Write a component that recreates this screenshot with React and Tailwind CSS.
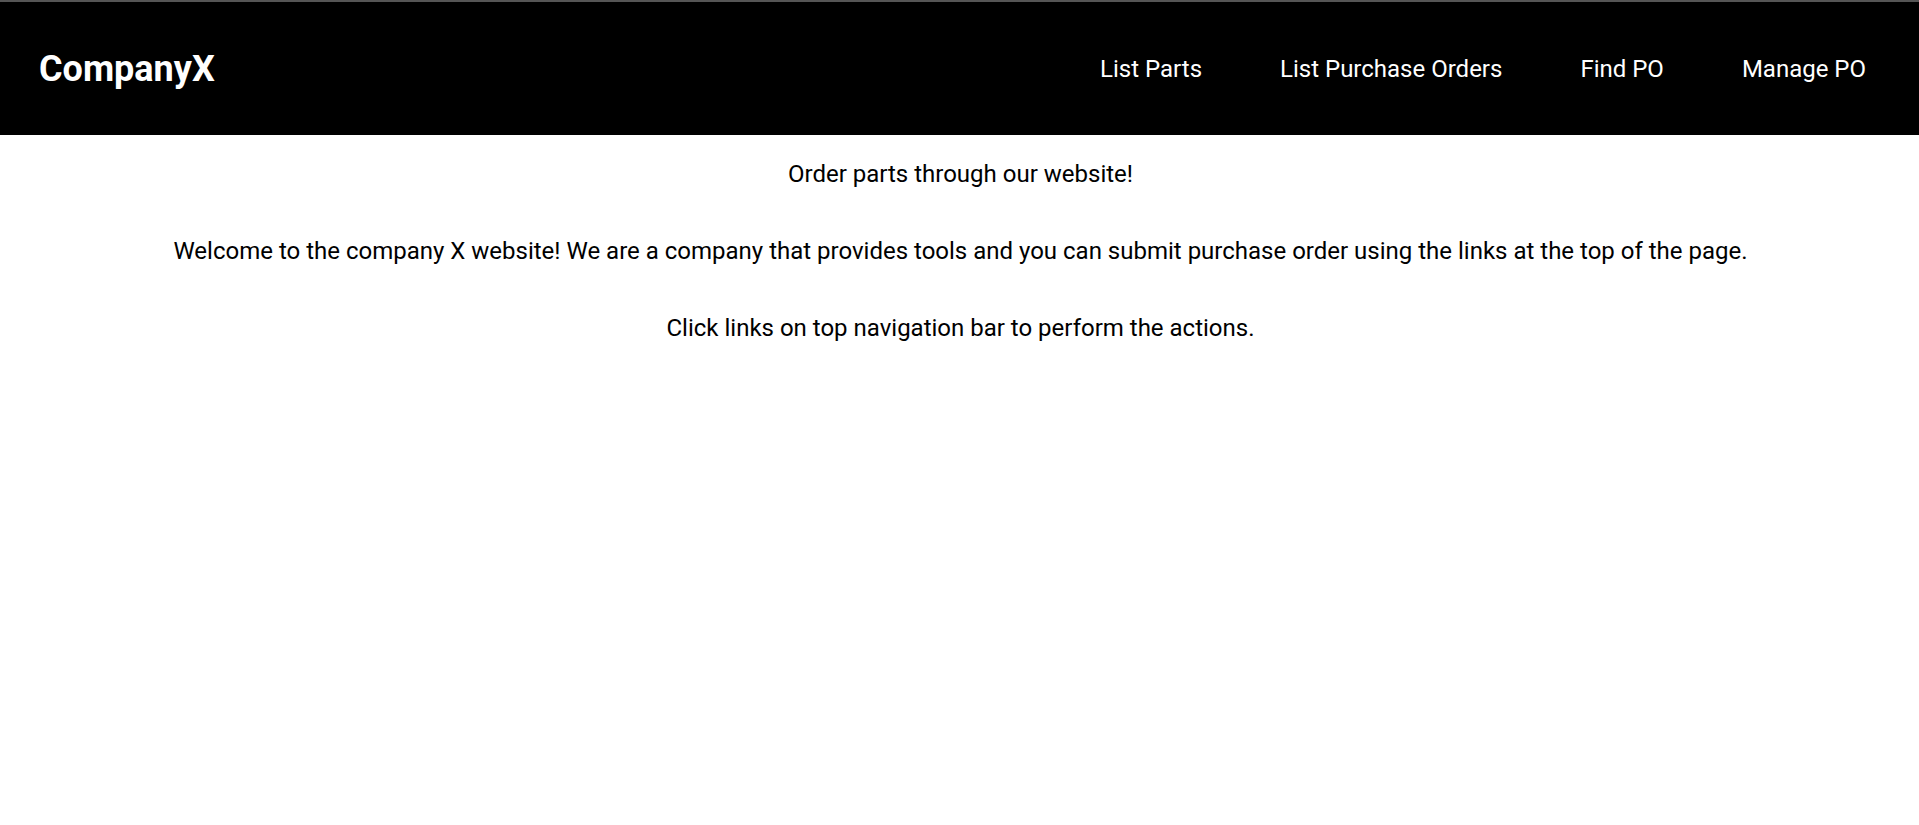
export default function App() {
  const links = ["List Parts", "List Purchase Orders", "Find PO", "Manage PO"];
  return (
    <div className="min-h-screen bg-white font-['Roboto',sans-serif] text-black">
      <div className="h-[2px] bg-[#555555]" />
      <header className="flex h-[133px] items-center justify-between bg-black pl-[39px] pr-[53px]">
        <div className="text-[36px] font-bold leading-none text-white">CompanyX</div>
        <nav className="flex items-center gap-[78px]">
          {links.map((l) => (
            <a key={l} href="#" className="text-[24px] leading-[28px] text-white">
              {l}
            </a>
          ))}
        </nav>
      </header>
      <main className="flex flex-col items-center gap-[49px] pl-[2px] pt-[25px] text-center text-[24px] leading-[28px]">
        <p>Order parts through our website!</p>
        <p>
          Welcome to the company X website! We are a company that provides tools and you can submit purchase order using the links at the top of the page.
        </p>
        <p>Click links on top navigation bar to perform the actions.</p>
      </main>
    </div>
  );
}
